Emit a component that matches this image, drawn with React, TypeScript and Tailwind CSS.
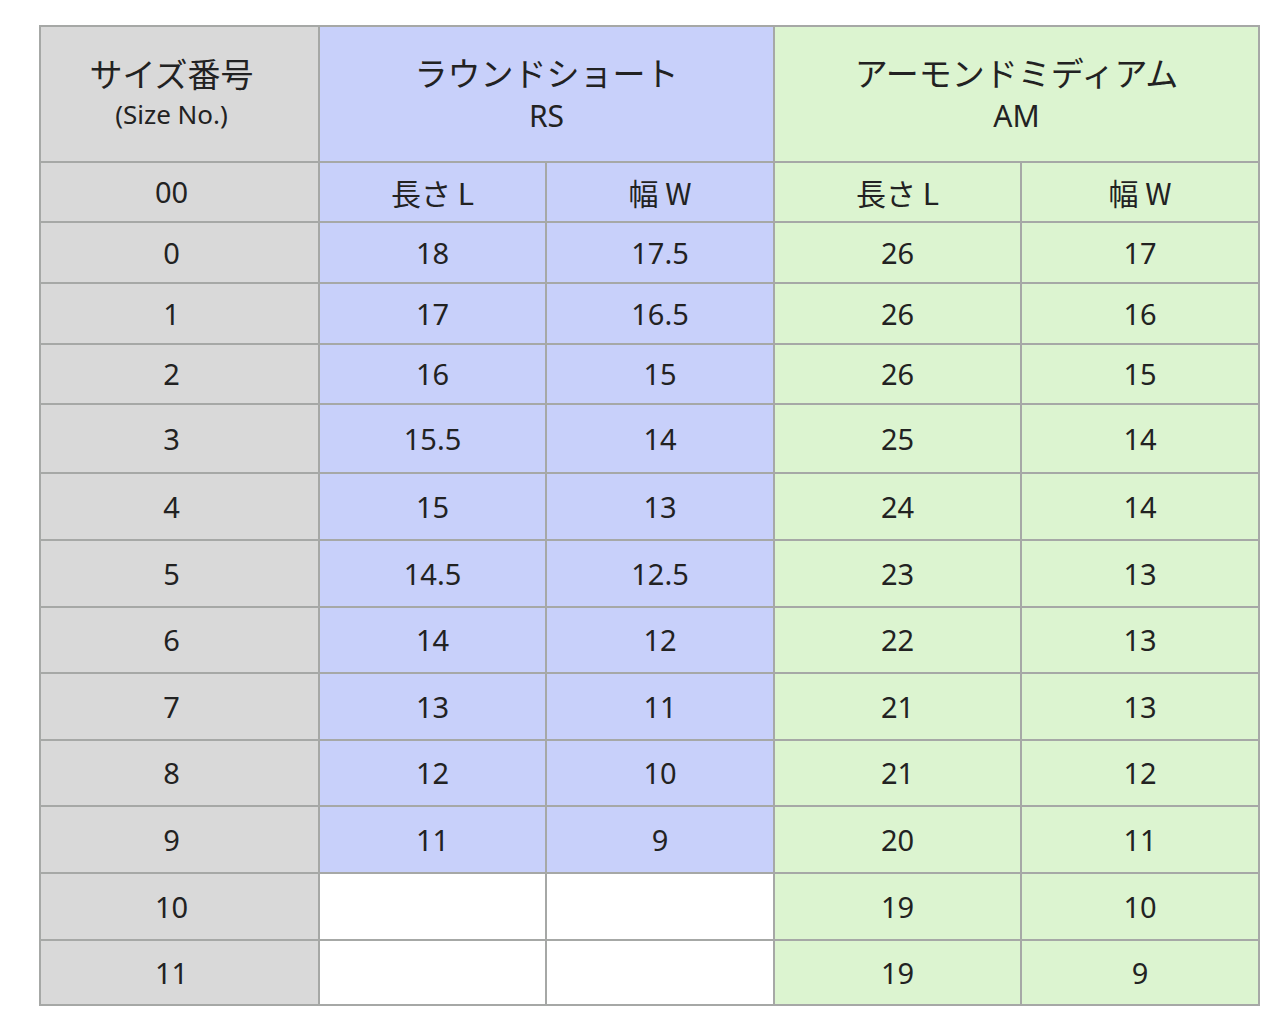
const rows: [string, string, string, string, string, string][] = [
  ['0', '18', '17.5', '26', '17', 'h-[61px]'],
  ['1', '17', '16.5', '26', '16', 'h-[61px]'],
  ['2', '16', '15', '26', '15', 'h-[60px]'],
  ['3', '15.5', '14', '25', '14', 'h-[69px]'],
  ['4', '15', '13', '24', '14', 'h-[67px]'],
  ['5', '14.5', '12.5', '23', '13', 'h-[67px]'],
  ['6', '14', '12', '22', '13', 'h-[66px]'],
  ['7', '13', '11', '21', '13', 'h-[67px]'],
  ['8', '12', '10', '21', '12', 'h-[66px]'],
  ['9', '11', '9', '20', '11', 'h-[67px]'],
  ['10', '', '', '19', '10', 'h-[67px]'],
  ['11', '', '', '19', '9', 'h-[65px]'],
]

const cell = 'border-2 border-[#a6a8a6] text-center align-middle p-0'
const gray = 'bg-[#d9d9d9] pr-4'
const blue = 'bg-[#c8d0fa]'
const green = 'bg-[#dcf4d0]'
const jp = "font-['Noto_Sans_CJK_JP',sans-serif]"

export default function App() {
  return (
    <div className="min-h-[1033px] bg-white pl-[39px] pt-[25px] text-[#222222] font-['Noto_Sans','Noto_Sans_CJK_JP',sans-serif]">
      <table className="table-fixed border-collapse w-[1219px] text-[29px]">
        <colgroup>
          <col className="w-[279px]" />
          <col className="w-[227px]" />
          <col className="w-[228px]" />
          <col className="w-[247px]" />
          <col className="w-[238px]" />
        </colgroup>
        <tbody>
          <tr className="h-[136px]">
            <td className={`${cell} ${gray}`}>
              <div className={`leading-[41px] text-[33px] ${jp}`}>サイズ番号</div>
              <div className="leading-[41px] text-[26px]">(Size No.)</div>
            </td>
            <td colSpan={2} className={`${cell} ${blue}`}>
              <div className={`leading-[44px] text-[33px] ${jp}`}>ラウンドショート</div>
              <div className="leading-[44px] text-[30px]">RS</div>
            </td>
            <td colSpan={2} className={`${cell} ${green}`}>
              <div className={`leading-[44px] text-[33px] ${jp}`}>アーモンドミディアム</div>
              <div className="leading-[44px] text-[30px]">AM</div>
            </td>
          </tr>
          <tr className="h-[60px]">
            <td className={`${cell} ${gray}`}>00</td>
            <td className={`${cell} ${blue} ${jp} text-[30px]`}>長さ L</td>
            <td className={`${cell} ${blue} ${jp} text-[30px]`}>幅 W</td>
            <td className={`${cell} ${green} ${jp} text-[30px]`}>長さ L</td>
            <td className={`${cell} ${green} ${jp} text-[30px]`}>幅 W</td>
          </tr>
          {rows.map(([size, rl, rw, al, aw, h]) => (
            <tr key={size} className={h}>
              <td className={`${cell} ${gray}`}>{size}</td>
              <td className={`${cell} ${rl ? blue : 'bg-white'}`}>{rl}</td>
              <td className={`${cell} ${rw ? blue : 'bg-white'}`}>{rw}</td>
              <td className={`${cell} ${green}`}>{al}</td>
              <td className={`${cell} ${green}`}>{aw}</td>
            </tr>
          ))}
        </tbody>
      </table>
    </div>
  )
}
